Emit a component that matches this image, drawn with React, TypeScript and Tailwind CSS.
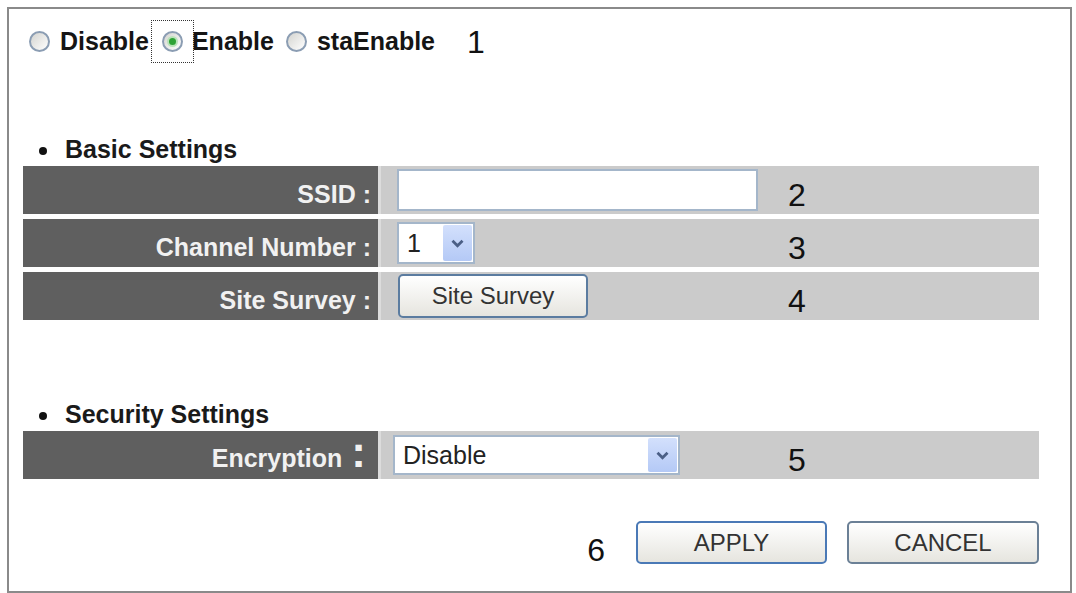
import type { ReactNode } from 'react';

// XP-style radio button
function Radio({ checked = false }: { checked?: boolean }) {
  return (
    <span className="flex h-[21px] w-[21px] shrink-0 items-center justify-center rounded-full border-2 border-[#8b9db3] bg-linear-to-br from-[#d4d4d0] to-white">
      {checked && (
        <span className="flex h-[11px] w-[11px] items-center justify-center rounded-full bg-[#b9e3b9]">
          <span className="h-[7px] w-[7px] rounded-full bg-[#2ea336]" />
        </span>
      )}
    </span>
  );
}

function Chevron() {
  return (
    <svg width="13" height="9" viewBox="0 0 13 9" fill="none">
      <path d="M1.5 1.8 L6.5 6.8 L11.5 1.8" stroke="#4b5f86" strokeWidth="2.8" />
    </svg>
  );
}

function Select({ value, width, height }: { value: string; width: string; height: string }) {
  return (
    <div className={`flex ${width} ${height} border-2 border-[#a4b6ca] bg-white`}>
      <span className="flex-1 self-center pl-[8px] text-[25px] leading-[25px] text-[#222]">{value}</span>
      <span className="m-[1px] flex w-[29px] items-center justify-center rounded-[2px] bg-linear-to-b from-[#d3e0fc] to-[#b4c9f6]">
        <Chevron />
      </span>
    </div>
  );
}

function Heading({ children }: { children: ReactNode }) {
  return (
    <div className="flex h-[25px] items-center pl-[16px]">
      <span className="mt-[2px] h-[8px] w-[8px] rounded-full bg-[#111]" />
      <span className="ml-[18px] text-[25px] font-bold leading-[25px] text-[#1a1a1a]">{children}</span>
    </div>
  );
}

function Row({ label, num, children, bigColon = false }: { label: string; num: string; children: ReactNode; bigColon?: boolean }) {
  return (
    <div className="flex h-[48px]">
      <div className={`flex w-[355px] items-center justify-end bg-[#5f5f5f] ${bigColon ? 'pr-[12px]' : 'pr-[7px]'} text-[#f1f1f1]`}>
        {bigColon ? (
          <span className="-mt-[6px] flex items-baseline font-bold">
            <span className="text-[25px] leading-[25px]">{label}</span>
            <span className="ml-[9px] text-[44px] leading-[36px]">:</span>
          </span>
        ) : (
          <span className="mt-[8px] text-[25px] font-bold leading-[25px]">{label} :</span>
        )}
      </div>
      <div className="flex flex-1 items-center border-l-[3px] border-[#dcdcdc] bg-[#cbcbcb] pl-[16px]">
        <div className="flex w-[391px] items-center">{children}</div>
        <span className="mt-[10px] text-[32px] leading-[32px] text-[#111]">{num}</span>
      </div>
    </div>
  );
}

function XpButton({ children, width, height, border }: { children: ReactNode; width: string; height: string; border: string }) {
  return (
    <button
      type="button"
      className={`flex ${width} ${height} items-center justify-center rounded-[5px] border-2 ${border} bg-linear-to-b from-white to-[#e6e5df] text-[24px] leading-[24px] text-[#333]`}
    >
      {children}
    </button>
  );
}

export default function App() {
  return (
    <div className="h-[593px] w-[1076px] overflow-hidden bg-white pl-[7px] pt-[7px] font-['Liberation_Sans',Arial,sans-serif]">
      <div className="h-[586px] w-[1065px] border-2 border-[#8a8a8a] pl-[14px] pr-[31px] pt-[10px]">
        {/* wireless mode */}
        <div className="flex h-[44px] items-center pl-[6px] text-[25px] font-bold leading-[25px] text-[#151515]">
          <Radio />
          <span className="ml-[10px]">Disable</span>
          <span className="ml-[2px] flex h-[43px] w-[43px] items-center justify-center border border-dotted border-[#333]">
            <Radio checked />
          </span>
          <span className="-ml-[2px]">Enable</span>
          <span className="ml-[12px]">
            <Radio />
          </span>
          <span className="ml-[10px]">staEnable</span>
          <span className="ml-[32px] mt-[2px] text-[32px] font-normal leading-[32px] text-[#111]">1</span>
        </div>

        <div className="mt-[74px]">
          <Heading>Basic Settings</Heading>
        </div>
        <div className="mt-[4px] flex flex-col gap-[5px]">
          <Row label="SSID" num="2">
            <div className="h-[42px] w-[361px] border-2 border-[#a4b6ca] bg-white" />
          </Row>
          <Row label="Channel Number" num="3">
            <Select value="1" width="w-[78px]" height="h-[42px]" />
          </Row>
          <Row label="Site Survey" num="4">
            <span className="ml-[1px]">
              <XpButton width="w-[190px]" height="h-[44px]" border="border-[#5b7ca0]">
                Site Survey
              </XpButton>
            </span>
          </Row>
        </div>

        <div className="mt-[82px]">
          <Heading>Security Settings</Heading>
        </div>
        <div className="mt-[4px]">
          <Row label="Encryption" num="5" bigColon>
            <span className="-ml-[4px]">
              <Select value="Disable" width="w-[287px]" height="h-[40px]" />
            </span>
          </Row>
        </div>

        <div className="mt-[40px] flex items-center justify-end">
          <span className="mr-[31px] mt-[15px] text-[32px] leading-[32px] text-[#111]">6</span>
          <XpButton width="w-[191px]" height="h-[43px]" border="border-[#4a79b6]">
            APPLY
          </XpButton>
          <span className="ml-[20px]">
            <XpButton width="w-[192px]" height="h-[43px]" border="border-[#6b8096]">
              CANCEL
            </XpButton>
          </span>
        </div>
      </div>
    </div>
  );
}
